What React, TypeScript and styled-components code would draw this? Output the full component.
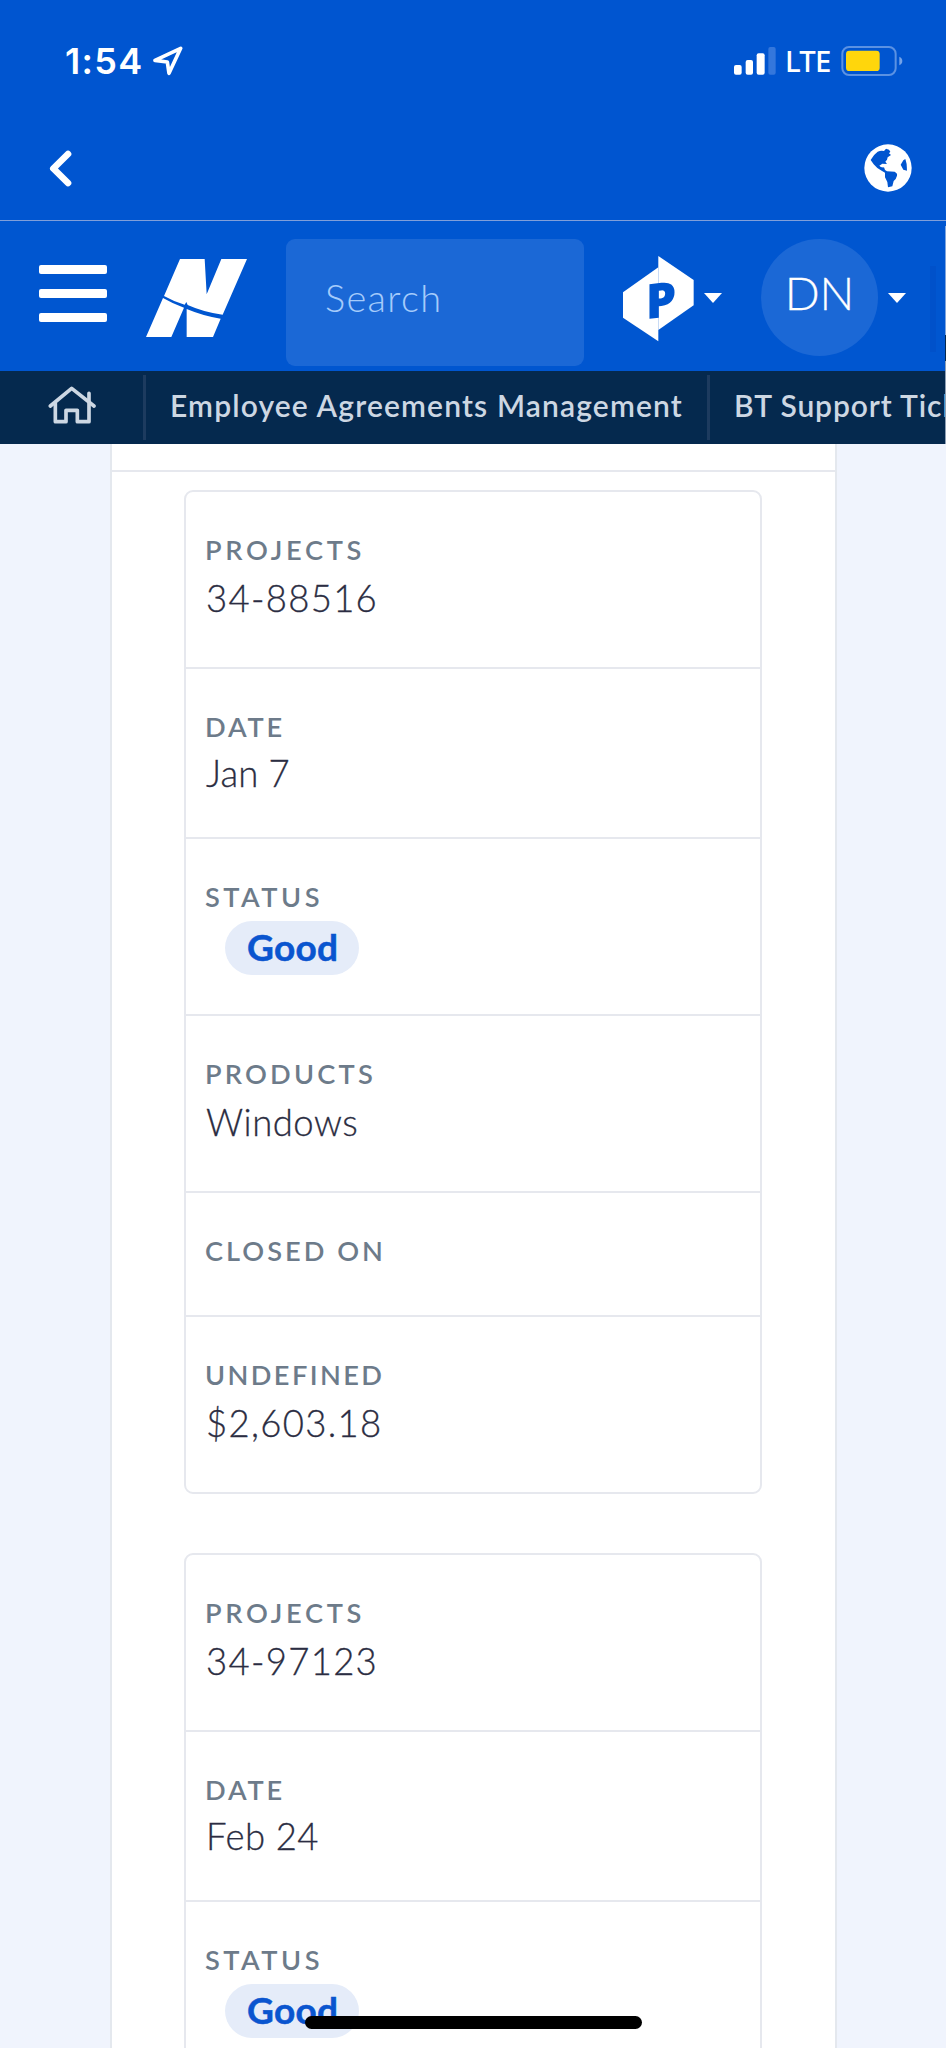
import React from "react";
import styled, { createGlobalStyle } from "styled-components";

const GlobalStyle = createGlobalStyle`
  *, *::before, *::after { box-sizing: border-box; }
  body {
    margin: 0;
    overflow: hidden;
    background: #f0f4fd;
    font-family: Lato, "Open Sans", sans-serif;
  }
`;

const Screen = styled.div`
  position: relative;
  display: flex;
  flex-direction: column;
  width: 946px;
  height: 2048px;
  overflow: hidden;
  background: #f0f4fd;
`;

/* ---------- phone chrome ---------- */

const DeviceHeader = styled.header`
  flex: none;
  height: 221px;
  background: #0055d0;
  border-bottom: 1px solid #809fda;
`;

const StatusBar = styled.div`
  display: flex;
  align-items: center;
  height: 121px;
  padding: 0 43px 0 65px;
  color: #fff;
`;

const Clock = styled.span`
  width: 88px;
  font: 600 36px/44px Inter, sans-serif;
  letter-spacing: 1.3px;
`;

const StatusIcons = styled.div`
  display: flex;
  align-items: center;
  margin-left: auto;
`;

const Network = styled.span`
  width: 56px;
  margin-left: 9px;
  font: 500 29.3px/40px "Noto Sans", sans-serif;
  letter-spacing: -0.8px;
`;

const BrowserBar = styled.div`
  display: flex;
  align-items: center;
  justify-content: space-between;
  height: 99px;
  padding: 0 34px 5px 49px;
`;

/* ---------- app header ---------- */

const AppHeader = styled.div`
  flex: none;
  display: flex;
  align-items: flex-start;
  height: 150px;
  padding: 18px 0 0 39px;
  background: #0056d0;
`;

const MenuButton = styled.div`
  display: flex;
  flex-direction: column;
  gap: 15px;
  width: 68px;
  margin-top: 26px;
`;

const MenuLine = styled.span`
  height: 9px;
  border-radius: 2px;
  background: #fff;
`;

const BrandLogo = styled.svg`
  width: 101px;
  height: 78px;
  margin: 20px 39px 0 39px;
`;

const SearchBox = styled.div`
  width: 298px;
  height: 127px;
  padding-left: 39px;
  border-radius: 9px;
  background: #1b68d6;
  color: #a5cbfb;
  font-size: 38px;
  font-weight: 300;
  line-height: 117px;
  letter-spacing: 1.3px;
`;

const ProductLogo = styled.svg`
  width: 71px;
  height: 86px;
  margin: 17px 0 0 39px;
`;

const Caret = styled.span`
  width: 0;
  height: 0;
  margin: 54px 0 0 10px;
  border: 9.5px solid transparent;
  border-top: 10px solid #fff;
  border-bottom: 0;
`;

const Avatar = styled.div`
  width: 117px;
  height: 117px;
  margin-left: 39px;
  border-radius: 50%;
  background: #1b68d6;
  color: #fff;
  font-size: 46px;
  font-weight: 300;
  line-height: 107px;
  text-align: center;
  -webkit-text-stroke: 0.3px #fff;
`;

const HeaderDivider = styled.span`
  width: 6px;
  height: 86px;
  margin: 27px 0 0 24px;
  background: #0051ca;
`;

/* ---------- tab bar ---------- */

const TabBar = styled.nav`
  flex: none;
  display: flex;
  align-items: center;
  height: 73px;
  background: #05294e;
`;

const HomeTab = styled.div`
  display: flex;
  flex: none;
  width: 143px;
  padding: 0 0 6px 48px;
`;

const TabDivider = styled.span`
  flex: none;
  width: 3px;
  height: 65px;
  background: #1d3b5f;
`;

const Tab = styled.div<{ $width: number; $spacing: number }>`
  flex: none;
  width: ${(p) => p.$width}px;
  padding: 0 0 6px 24px;
  color: #cdd7e3;
  font-size: 30px;
  font-weight: 600;
  line-height: 40px;
  letter-spacing: ${(p) => p.$spacing}px;
  white-space: nowrap;
`;

/* ---------- content ---------- */

const Panel = styled.main`
  flex: 1;
  width: 727px;
  margin-left: 110px;
  border: solid #e4e8ee;
  border-width: 0 2px;
  background: #fff;
`;

const PanelTop = styled.div`
  height: 28px;
  border-bottom: 2px solid #e6e8ee;
`;

const CardList = styled.div`
  display: flex;
  flex-direction: column;
  gap: 59px;
  padding: 18px 73px 0 72px;
`;

const Card = styled.section`
  border: 2px solid #e6e8ee;
  border-radius: 9px;
`;

const Field = styled.div<{ $height: number }>`
  height: ${(p) => p.$height}px;
  padding: 42px 0 0 19px;
  border-bottom: 2px solid #e6e8ee;
  &:last-child { border-bottom: 0; }
`;

const FieldLabel = styled.div<{ $spacing: number }>`
  color: #6d7b8a;
  font-size: 27.2px;
  font-weight: 600;
  line-height: 32px;
  letter-spacing: ${(p) => p.$spacing}px;
  white-space: nowrap;
`;

const FieldValue = styled.div<{ $spacing: number; $gap: number }>`
  margin-top: ${(p) => p.$gap}px;
  padding-left: 1px;
  color: #2b2d42;
  font-size: 36.5px;
  font-weight: 300;
  line-height: 44px;
  letter-spacing: ${(p) => p.$spacing}px;
  white-space: nowrap;
  -webkit-text-stroke: 0.3px #2b2d42;
`;

const StatusPill = styled.div`
  width: 134px;
  height: 54px;
  margin: 8px 0 0 20px;
  padding-left: 22px;
  border-radius: 27px;
  background: #e5ecf9;
  color: #0a55cf;
  font-size: 37px;
  font-weight: 700;
  line-height: 51px;
  letter-spacing: 0.3px;
  -webkit-text-stroke: 0.5px #0a55cf;
`;

const HomeIndicator = styled.div`
  position: absolute;
  left: 305px;
  top: 2016px;
  width: 337px;
  height: 13px;
  border-radius: 7px;
  background: #000;
`;

/* Edge of the neighbouring off-screen view, over the header's right side. */
const ViewEdge = styled.div`
  position: absolute;
  right: 0;
  top: 226px;
  width: 1px;
  height: 218px;
  background: linear-gradient(#7fa5dd 0 109px, #05294e 109px 135px, #8fa0b5 135px);
`;

type FieldData = {
  label: string;
  labelSpacing: number;
  height: number;
  value?: string;
  valueSpacing?: number;
  gap?: number;
  pill?: boolean;
};

const makeFields = (project: string, date: string, dateSpacing: number): FieldData[] => [
  { label: "PROJECTS", labelSpacing: 3.7, height: 177, value: project, valueSpacing: 1.3 },
  { label: "DATE", labelSpacing: 2.8, height: 170, value: date, valueSpacing: dateSpacing, gap: 8 },
  { label: "STATUS", labelSpacing: 3.5, height: 177, value: "Good", pill: true },
  { label: "PRODUCTS", labelSpacing: 3.2, height: 177, value: "Windows", valueSpacing: 0.5 },
  { label: "CLOSED ON", labelSpacing: 3, height: 124 },
  { label: "UNDEFINED", labelSpacing: 2.4, height: 175, value: "$2,603.18", valueSpacing: 1.3 },
];

const cards = [makeFields("34-88516", "Jan 7", 0.1), makeFields("34-97123", "Feb 24", 0.4)];

const LocationIcon = () => (
  <svg width="30" height="30" viewBox="458 137 90 90">
    <path d="M464 180 L541 144 L506 219 L501 185 Z" fill="none" stroke="#fff" strokeWidth="11" strokeLinejoin="round" />
  </svg>
);

const SignalIcon = () => (
  <svg width="42" height="28" viewBox="781 138 126 84" fill="#fff">
    <rect x="781" y="192" width="23" height="29" rx="6" />
    <rect x="816" y="177" width="22" height="44" rx="6" />
    <rect x="849" y="157" width="24" height="64" rx="6" />
    <rect x="884" y="138" width="22" height="83" rx="6" fill="#3477dc" />
  </svg>
);

const BatteryIcon = () => (
  <svg width="62" height="30" viewBox="1103 135 186 90">
    <rect x="1107" y="138" width="160" height="84" rx="20" fill="none" stroke="#5b92e3" strokeWidth="6" />
    <rect x="1118" y="149" width="101" height="61" rx="10" fill="#ffd60c" />
    <path d="M1278 167 Q1287 171 1287 180 Q1287 189 1278 193 Z" fill="#74a3e8" />
  </svg>
);

const BackIcon = () => (
  <svg width="23" height="37" viewBox="149 448 69 111">
    <path d="M206 460 L162 503.500 L206 547" fill="none" stroke="#fff" strokeWidth="20" strokeLinecap="round" strokeLinejoin="round" />
  </svg>
);

const GlobeIcon = () => (
  <svg width="48" height="48" viewBox="1173 430 144 144">
    <circle cx="1245" cy="502" r="71" fill="#fff" />
    <g fill="#0055d0">
      <path d="M1193 478 Q1201 462 1214 453 Q1224 448 1233 451 L1239 444 L1248 447 L1252 453 L1248 458 L1254 463 L1244 470 L1242 477 L1237 483 L1242 490 L1228 489 L1219 495 Q1223 501 1233 500 L1236 508 L1242 512 L1265 513 Q1274 518 1272 525 L1268 535 L1262 541 L1258 557 L1245 560 L1243 544 L1236 530 L1236 516 L1226 510 Q1213 505 1202 491 Z" />
      <path d="M1283 492 L1291 479 L1297 475 Q1303 490 1302 510 L1291 507 Z" />
    </g>
  </svg>
);

const HomeIcon = () => (
  <svg width="48" height="38" viewBox="144 511 144 114" fill="none" stroke="#cdd7e3" strokeWidth="11" strokeLinejoin="round" strokeLinecap="round">
    <path d="M151 571 L215 518 L282 571" />
    <path d="M166 563 V618 H198 V584 H232 V618 H267 V533" />
  </svg>
);

export default function App() {
  return (
    <>
      <GlobalStyle />
      <Screen>
        <DeviceHeader>
          <StatusBar>
            <Clock>1:54</Clock>
            <LocationIcon />
            <StatusIcons>
              <SignalIcon />
              <Network>LTE</Network>
              <BatteryIcon />
            </StatusIcons>
          </StatusBar>
          <BrowserBar>
            <BackIcon />
            <GlobeIcon />
          </BrowserBar>
        </DeviceHeader>

        <AppHeader>
          <MenuButton>
            <MenuLine />
            <MenuLine />
            <MenuLine />
          </MenuButton>
          <BrandLogo viewBox="438 130 303 234" fill="#fff">
            <path d="M540 130 H614 L620 236 L664 130 H741 L668 297 Q612 290 563 268 L559 259 L554 267 Q520 257 492 241 Z" />
            <path d="M489 247 Q520 265 552 276 L514 364 H438 Z" />
            <path d="M560 280 Q610 301 662 309 L639 364 H560 Z" />
          </BrandLogo>
          <SearchBox>Search</SearchBox>
          <ProductLogo viewBox="450 122 213 258">
            <path d="M450 231 L556 156 V378 L450 307 Z" fill="#fff" />
            <path d="M556 122 L662 194 V270 L556 344 Z" fill="#fff" />
            <text
              x="518"
              y="312"
              fill="#0056d0"
              fontFamily="Open Sans, sans-serif"
              fontWeight="800"
              fontSize="145"
              transform="translate(518 312) skewY(-7) translate(-518 -312)"
            >
              P
            </text>
          </ProductLogo>
          <Caret />
          <Avatar>DN</Avatar>
          <Caret />
          <HeaderDivider />
        </AppHeader>

        <TabBar>
          <HomeTab>
            <HomeIcon />
          </HomeTab>
          <TabDivider />
          <Tab $width={561} $spacing={1.15}>Employee Agreements Management</Tab>
          <TabDivider />
          <Tab $width={236} $spacing={0.9}>BT Support Tick</Tab>
        </TabBar>

        <Panel>
          <PanelTop />
          <CardList>
            {cards.map((fields, i) => (
              <Card key={i}>
                {fields.map((f) => (
                  <Field key={f.label} $height={f.height}>
                    <FieldLabel $spacing={f.labelSpacing}>{f.label}</FieldLabel>
                    {f.pill && <StatusPill>{f.value}</StatusPill>}
                    {!f.pill && f.value && (
                      <FieldValue $spacing={f.valueSpacing ?? 1} $gap={f.gap ?? 10}>
                        {f.value}
                      </FieldValue>
                    )}
                  </Field>
                ))}
              </Card>
            ))}
          </CardList>
        </Panel>
        <ViewEdge />
        <HomeIndicator />
      </Screen>
    </>
  );
}
